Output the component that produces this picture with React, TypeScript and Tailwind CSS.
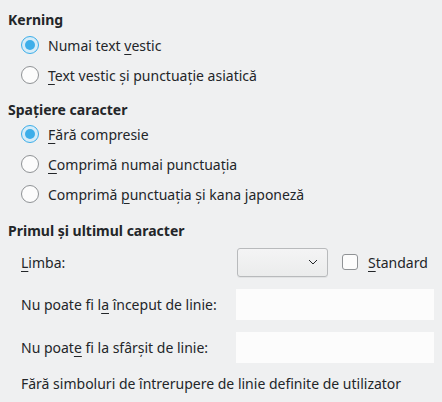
import React from "react";

function Radio({ checked, children }: { checked?: boolean; children: React.ReactNode }) {
  return (
    <div className="flex h-[30px] items-center pl-[21px]">
      {checked ? (
        <span className="flex h-[18px] w-[18px] items-center justify-center rounded-full border border-[#3daee9] bg-[#d6ecf8]">
          <span className="h-[10px] w-[10px] rounded-full bg-[#3daee9]" />
        </span>
      ) : (
        <span className="h-[18px] w-[18px] rounded-full border border-[#8f9295] bg-[#fcfcfc]" />
      )}
      <span className="ml-[9px]">{children}</span>
    </div>
  );
}

function U({ children }: { children: React.ReactNode }) {
  return <span className="underline decoration-1 underline-offset-[3px]">{children}</span>;
}

export default function App() {
  return (
    <div
      className="h-[402px] w-[442px] bg-[#eff0f1] text-[14px] leading-[19px] text-[#232629]"
      style={{ fontFamily: '"Noto Sans", "Open Sans", sans-serif' }}
    >
      <div className="pt-[8px]">
        <div className="flex h-[22px] items-center pl-[8px] font-bold">Kerning</div>
        <Radio checked>
          Numai text <U>v</U>estic
        </Radio>
        <Radio>
          <U>T</U>ext vestic și punctuație asiatică
        </Radio>
        <div className="mt-[9px] flex h-[20px] items-center pl-[8px] font-bold">Spațiere caracter</div>
        <Radio checked>
          <U>F</U>ără compresie
        </Radio>
        <Radio>
          <U>C</U>omprimă numai punctuația
        </Radio>
        <Radio>
          Comprimă <U>p</U>unctuația și kana japoneză
        </Radio>
        <div className="mt-[11px] flex h-[20px] items-center pl-[8px] font-bold">Primul și ultimul caracter</div>
        <div className="mt-[7px] grid grid-cols-[215px_1fr] gap-y-[12px] pl-[21px] pr-[8px]">
          <div className="flex h-[30px] items-center">
            <span>
              <U>L</U>imba:
            </span>
          </div>
          <div className="flex h-[30px] items-center">
            <div className="ml-[1px] flex h-[29px] w-[91px] items-center justify-end rounded-[3px] border border-[#b8babc] bg-gradient-to-b from-[#f4f4f5] to-[#ebecec] pr-[9px] shadow-[0_1px_0_rgba(0,0,0,0.05)]">
              <svg width="10" height="6" viewBox="0 0 10 6" fill="none">
                <path d="M1 1l4 4 4-4" stroke="#232629" strokeWidth="1" />
              </svg>
            </div>
            <span className="ml-[14px] h-[16px] w-[16px] rounded-[3px] border border-[#8f9295] bg-[#fcfcfc]" />
            <span className="ml-[10px]">
              <U>S</U>tandard
            </span>
          </div>
          <div className="flex h-[31px] items-center">
            <span>
              Nu poate fi l<U>a</U> început de linie:
            </span>
          </div>
          <div className="h-[31px] w-[198px] bg-[#fcfcfc]" />
          <div className="flex h-[31px] items-center">
            <span>
              Nu poat<U>e</U> fi la sfârșit de linie:
            </span>
          </div>
          <div className="h-[31px] w-[198px] bg-[#fcfcfc]" />
        </div>
        <div className="mt-[11px] pl-[21px]">Fără simboluri de întrerupere de linie definite de utilizator</div>
      </div>
    </div>
  );
}
